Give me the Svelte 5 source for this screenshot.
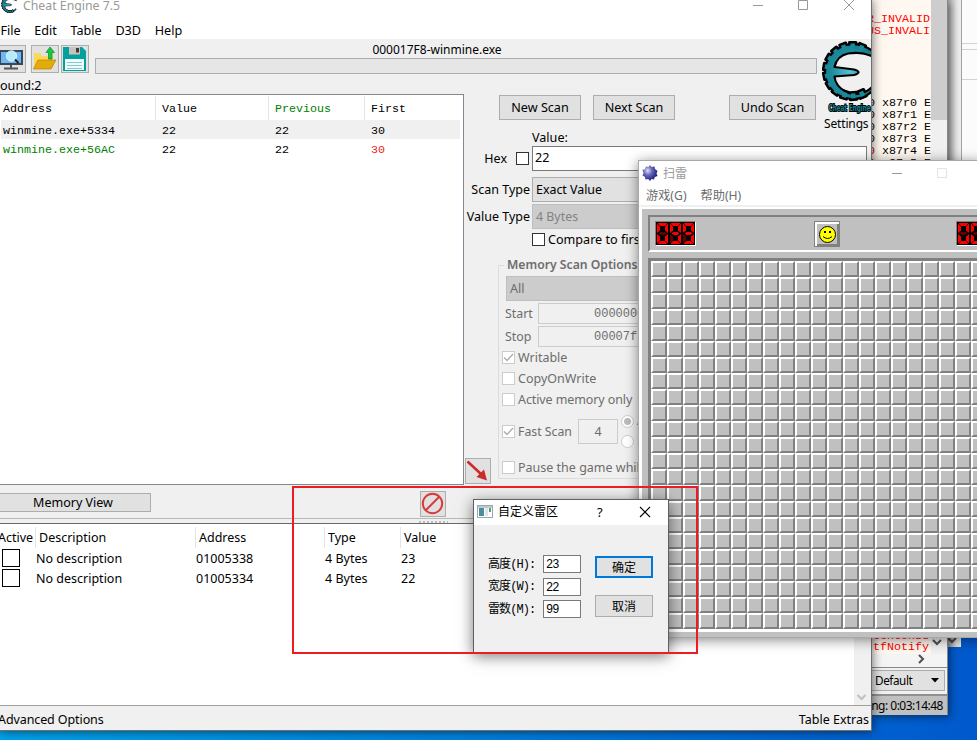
<script>
  const menus = ['File', 'Edit', 'Table', 'D3D', 'Help'];
  const found = [
    { address: 'winmine.exe+5334', value: '22', previous: '22', first: '30', kind: 'selected' },
    { address: 'winmine.exe+56AC', value: '22', previous: '22', first: '30', kind: 'static' }
  ];
  const records = [
    { address: '01005338', value: '23' },
    { address: '01005334', value: '22' }
  ];
  const fields = [
    { label: '高度(H):', value: '23' },
    { label: '宽度(W):', value: '22' },
    { label: '雷数(M):', value: '99' }
  ];
  const registers = [0, 1, 2, 3, 4, 5];
  const segments = [
    'M1.500 1H11.500L9 4H4Z',
    'M12 1.500V11L9 8.500V4.500Z',
    'M12 12V21.500L9 18.500V14.500Z',
    'M1.500 22H11.500L9 19H4Z',
    'M1 12V21.500L4 18.500V14.500Z',
    'M1 1.500V11L4 8.500V4.500Z',
    'M2.500 11.500L4.500 10H8.500L10.500 11.500L8.500 13H4.500Z'
  ];
  const lit = { 0: [0, 1, 2, 3, 4, 5], 9: [0, 1, 2, 3, 5, 6] };
  const teeth = Array.from({ length: 12 }, (_, i) => 22 - i * 20.5);
</script>

{#snippet gear()}
  <g stroke="#000" stroke-width="3" stroke-linejoin="round" fill="#178a9b">
    {#each teeth as a}
      <rect x="-3.2" y="-28.5" width="6.4" height="7" transform="translate(30 30) rotate({a})" />
    {/each}
  </g>
  <path d="M53 12C44 4 34 1.500 24 4C11 8 3 18 3 31C3 43 11 54 24 57C35 60 46 56 53 47L51 45C44 53 32 55 24 51C17 47 13 42 12.500 35.500L32 34Q41 31 32 28.500L12.500 26C14 19 19 14 26 12.500C35 11 45 12 53 17Z" fill="url(#teal)" stroke="#000" stroke-width="2.2" stroke-linejoin="round" />
  <g fill="#178a9b">
    {#each teeth as a}
      <rect x="-2.2" y="-27.5" width="4.4" height="5" transform="translate(30 30) rotate({a})" />
    {/each}
  </g>
{/snippet}

{#snippet digit(n)}
  <svg width="13" height="23" viewBox="0 0 13 23">
    <rect width="13" height="23" fill="#000" />
    {#each segments as d, i}
      <path {d} fill={lit[n].includes(i) ? '#f00' : '#600000'} />
    {/each}
  </svg>
{/snippet}

{#snippet check(on = false, dim = false)}
  <span class="check" class:dim>
    {#if on}<svg width="11" height="11" viewBox="0 0 11 11"><path d="M1 5.5L4 8.5L10 2" fill="none" stroke="#adadad" stroke-width="1.4" /></svg>{/if}
  </span>
{/snippet}

<div class="desktop">
  <section class="win far">
    <div class="far-head"></div>
    <div class="far-row"></div>
    <div class="far-gap"></div>
  </section>
  <section class="win farscroll">
    <svg width="14" height="10" viewBox="0 0 14 10"><path d="M1 1L5 5L9 1" fill="none" stroke="#505050" stroke-width="2" /></svg>
  </section>

  <section class="win debugger">
    <div class="dbg-main">
      <div class="dbg-code">
        <div class="red flags"><span>R_INVALID</span><span>US_INVALI</span></div>
        <div class="regs">
          {#each registers as r}<span><i class:hot={r > 3}>0</i> x87r{r} E</span>{/each}
        </div>
        <div class="red tail"><span>textonSu</span><span>tfNotify</span></div>
      </div>
      <div class="dbg-scroll"><div class="thumb"></div>
        <svg width="15" height="12" viewBox="0 0 15 12"><path d="M2 4L6 8L10 4" fill="none" stroke="#505050" stroke-width="2" /></svg>
      </div>
    </div>
    <div class="dbg-hscroll"><svg width="10" height="10" viewBox="0 0 10 10"><path d="M1 1L5 5L1 9" fill="none" stroke="#505050" stroke-width="2" /></svg></div>
    <div class="dbg-combo"><span>Default</span><svg width="8" height="5" viewBox="0 0 8 5"><path d="M0 0H8L4 4.5Z" /></svg></div>
    <div class="dbg-status">ng: 0:03:14:48</div>
  </section>

  <section class="win engine">
    <header class="title">
      <svg class="mini" width="17" height="17" viewBox="0 0 58 60"><g>{@render gear()}</g></svg>
      <span class="name">Cheat Engine 7.5</span>
      <svg class="ctl" width="100" height="14" viewBox="0 0 100 14"><path d="M0 6.5H10M45.500 1.500H54.500V10.500H45.500ZM91 1L101 11M101 1L91 11" transform="translate(-3 -1)" fill="none" stroke="#999" /></svg>
    </header>
    <nav class="menu">{#each menus as m}<span>{m}</span>{/each}</nav>

    <div class="upper">
      <div class="tools">
        <div class="iconrow">
          <span class="tool">
            <svg width="26" height="26" viewBox="0 0 26 26"><rect x="0" y="4" width="24" height="15" fill="#34495a" /><rect x="2" y="6" width="20" height="11" fill="#72b6f4" /><circle cx="12.500" cy="10" r="5.200" fill="#b9ecf8" stroke="#d9f5fb" /><path d="M16 13.500L19.500 17" stroke="#222" stroke-width="2" /><path d="M12 19V22M5 22.500H19" stroke="#555" stroke-width="2" /></svg>
          </span>
          <span class="tool">
            <svg width="26" height="26" viewBox="0 0 26 26"><path d="M2 7H8L10 10H21V22H2Z" fill="#fbd75b" /><path d="M6 14H24L19 23H1.500Z" fill="#e3ab0a" stroke="#b88400" stroke-width=".7" /><path d="M18 1L22.500 6.500H20V13H16.500V6.500H14Z" fill="#14c840" stroke="#0a8e2a" stroke-width=".7" /></svg>
          </span>
          <span class="tool">
            <svg width="26" height="26" viewBox="0 0 26 26"><path d="M1 1H20L24 5V25H1Z" fill="#03a09d" /><rect x="7" y="1" width="11" height="7.500" fill="#c5c5bd" /><rect x="14" y="2" width="3" height="4.500" fill="#423b38" /><rect x="3" y="13" width="19" height="11" fill="#eefcfc" /><path d="M5 16.500H20M5 19.500H20M5 22.500H20" stroke="#86c9c8" /></svg>
          </span>
          <div class="progress"><span>000017F8-winmine.exe</span><div class="bar"></div></div>
        </div>
        <div class="foundcount">ound:2</div>
      </div>

      <div class="settings">
        <svg width="50" height="73" viewBox="0 0 50 73">
          <defs><radialGradient id="teal" cx=".5" cy=".5" r=".6"><stop offset="0" stop-color="#57c4d6" /><stop offset=".6" stop-color="#1f8c9e" /><stop offset="1" stop-color="#147082" /></radialGradient></defs>
          {@render gear()}
          <text x="6.500" y="70" textLength="42" lengthAdjust="spacingAndGlyphs" class="logotext">Cheat Engine</text>
        </svg>
        <span>Settings</span>
      </div>

      <div class="list">
        <div class="lrow lhead"><span>Address</span><span>Value</span><span class="green">Previous</span><span>First</span></div>
        {#each found as f}
          <div class="lrow {f.kind}"><span>{f.address}</span><span>{f.value}</span><span>{f.previous}</span><span class="first">{f.first}</span></div>
        {/each}
      </div>

      <div class="buttons"><span class="btn">New Scan</span><span class="btn">Next Scan</span><span class="btn undo">Undo Scan</span></div>

      <div class="form">
        <div class="vlabel">Value:</div>
        <div class="frow hexrow"><span class="lab hexlab">Hex</span>{@render check()}<div class="input">22</div></div>
        <div class="frow"><span class="lab">Scan Type</span><div class="combo">Exact Value</div></div>
        <div class="frow vt"><span class="lab">Value Type</span><div class="combo off">4 Bytes</div></div>
        <div class="compare">{@render check()}<span>Compare to first</span></div>
        <div class="bottomform">
          <span class="arrowbtn"><svg width="24" height="24" viewBox="0 0 24 24"><path d="M1.500 2.500L15 15" stroke="#cc2b2b" stroke-width="2.6" /><path d="M21 21.500L18 10.500L10.500 18Z" fill="#cc2b2b" /></svg></span>
          <fieldset>
            <legend>Memory Scan Options</legend>
            <div class="all">All</div>
            <div class="range"><span>Start</span><div>0000000</div></div>
            <div class="range"><span>Stop</span><div>00007ff</div></div>
            <div class="opt">{@render check(true, true)}<span>Writable</span></div>
            <div class="opt">{@render check(false, true)}<span>CopyOnWrite</span></div>
            <div class="opt">{@render check(false, true)}<span class="amo">Active memory only</span></div>
            <div class="opt fast">{@render check(true, true)}<span class="fs">Fast Scan</span><div class="four">4</div>
              <div class="radios"><span><i class="radio on"></i>A</span><span><i class="radio"></i>L</span></div>
            </div>
            <div class="opt pause">{@render check(false, true)}<span>Pause the game while</span></div>
          </fieldset>
        </div>
      </div>
    </div>

    <div class="midbar">
      <span class="btn mem">Memory View</span>
      <span class="stop"><svg width="24" height="24" viewBox="0 0 24 24"><circle cx="11.500" cy="11.500" r="9.700" fill="none" stroke="#d83a3a" stroke-width="2" /><path d="M5 18L18 5" stroke="#d83a3a" stroke-width="2" /></svg></span>
    </div>
    <div class="splitter"><i></i></div>
    <div class="table">
      <div class="cols">
        <div class="trow thead"><span>Active</span><span>Description</span><span>Address</span><span>Type</span><span>Value</span></div>
        {#each records as r}
          <div class="trow"><span><b class="box"></b></span><span>No description</span><span>{r.address}</span><span>4 Bytes</span><span>{r.value}</span></div>
        {/each}
      </div>
      <div class="tscroll"><svg width="12" height="8" viewBox="0 0 12 8"><path d="M1.500 2L5.500 6L9.500 2" fill="none" stroke="#bfbfbf" stroke-width="2" /></svg></div>
    </div>
    <footer class="foot"><span>Advanced Options</span><span>Table Extras</span></footer>
  </section>

  <section class="win mines">
    <header class="mtitle">
      <svg width="16" height="16" viewBox="0 0 16 16"><defs><radialGradient id="ball" cx=".35" cy=".35" r=".7"><stop offset="0" stop-color="#dfe0f5" /><stop offset=".4" stop-color="#6a6ab8" /><stop offset="1" stop-color="#14147a" /></radialGradient></defs><path d="M8 0L9.500 2L12.500 1.500L13 4L15.500 6L14.500 8.500L15.500 11L12.800 12L12 14.500L9.500 14L8 16L6.200 14L3.500 14.500L3 12L.5 10.500L1.500 8L.5 5L3 4L4 1.500L6.500 2Z" fill="url(#ball)" /></svg>
      <span>扫雷</span>
      <svg class="mctl" width="70" height="14" viewBox="0 0 70 14"><path d="M0 8.500H10" stroke="#999" /><path d="M45.500 3.500H54.500V12.500H45.500Z" fill="none" stroke="#e3e3e3" /></svg>
    </header>
    <nav class="mmenu"><span>游戏(G)</span><span>帮助(H)</span></nav>
    <div class="mframe">
      <div class="score">
        <div class="led">{@render digit(0)}{@render digit(9)}{@render digit(9)}</div>
        <div class="face"><svg width="19" height="19" viewBox="0 0 19 19"><circle cx="9.500" cy="9.500" r="8" fill="#ff0" stroke="#000" /><path d="M6 6H8V8H6ZM11 6H13V8H11Z" /><path d="M5 11.500Q9.500 15.500 14 11.500" fill="none" stroke="#000" /></svg></div>
        <div class="led right">{@render digit(0)}{@render digit(0)}</div>
      </div>
      <div class="field">
        <svg width="326" height="368"><defs><pattern id="cell" width="16" height="16" patternUnits="userSpaceOnUse"><path d="M0 0H16V16H0Z" fill="#808080" /><path d="M0 0H16L14 2V14H2L0 16Z" fill="#fff" /><path d="M2 2H14V14H2Z" fill="#c0c0c0" /></pattern></defs><rect width="326" height="368" fill="url(#cell)" /></svg>
      </div>
    </div>
  </section>

  <section class="win dialog">
    <header class="dtitle">
      <svg width="16" height="14" viewBox="0 0 16 14"><rect x=".5" y=".5" width="15" height="12" fill="#fff" stroke="#9aa7ad" /><rect x="1" y="1" width="14" height="2" fill="#b8cbd2" /><rect x="2" y="3" width="5" height="8" fill="#4c8f98" /><rect x="8" y="3" width="3" height="8" fill="#dde4ea" /><rect x="12" y="3" width="2" height="4" fill="#5aa06c" /></svg>
      <span class="dname">自定义雷区</span><span class="q">?</span>
      <svg width="12" height="12" viewBox="0 0 12 12"><path d="M1 1L11 11M11 1L1 11" stroke="#000" stroke-width="1.100" /></svg>
    </header>
    <div class="dbody">
      <div class="dfields">{#each fields as f}<div class="dfield"><span>{f.label}</span><div>{f.value}</div></div>{/each}</div>
      <div class="dbtns"><span class="ok">确定</span><span>取消</span></div>
    </div>
  </section>
  <div class="marker"></div>
</div>

<style>
  .desktop { position: relative; width: 977px; height: 740px; overflow: hidden; white-space: nowrap; background: linear-gradient(90deg, #00a3ea, #0059cc); font: 12.600px/16px "Noto Sans", "Noto Sans CJK SC", sans-serif; color: #000; }
  .desktop :global(*) { box-sizing: border-box; }
  svg { display: block; flex: none; }
  .win { position: absolute; overflow: hidden; }
  .far { left: 961px; top: 0; width: 16px; height: 400px; background: #fbfbfb; border-left: 1px solid #a0a0a0; }
  .far-head { height: 44px; border-bottom: 1px solid #d2d2d2; }
  .far-row { height: 6px; border-bottom: 1px solid #d2d2d2; }
  .far-gap { height: 30px; border-bottom: 1px solid #d2d2d2; }
  .farscroll { left: 947px; top: 0; width: 14px; height: 647px; background: linear-gradient(90deg, #a8a8a8, #e4e4e4 70%, #eee); display: flex; align-items: flex-end; }
  .debugger { left: 871px; top: 0; width: 77px; height: 715px; background: #f0f0f0; border-right: 1px solid #828790; display: flex; flex-direction: column; font-family: "Liberation Mono", monospace; font-size: 11.700px; line-height: 12px; box-shadow: 2px 2px 8px #0007; }
  .dbg-main { display: flex; height: 654px; }
  .dbg-code { width: 60px; background: #fff8f0; overflow: hidden; display: flex; flex-direction: column; }
  .red { color: #f00; display: flex; flex-direction: column; }
  .flags { padding-top: 13px; height: 97px; }
  .regs { display: flex; flex-direction: column; height: 536px; margin-left: -3px; }
  .regs i { font-style: normal; }
  .regs .hot { color: #c00; }
  .flags span { margin-left: -4px; }
  .tail { margin-left: 2px; line-height: 11px; flex: none; margin-top: -2px; }
  .dbg-scroll { width: 16px; display: flex; flex-direction: column; justify-content: space-between; background: #f0f0f0; }
  .thumb { height: 120px; background: #cdcdcd; }
  .dbg-scroll svg { margin-bottom: 6px; }
  .dbg-hscroll { height: 14px; padding: 0 0 0 47px; border-bottom: 1px solid #828790; background: #f4f4f4; }
  .dbg-combo { margin: 2px 2px 0 0; height: 21px; border: 1px solid #acacac; background: #e1e1e1; display: flex; align-items: center; justify-content: space-between; padding: 0 5px 1px 3px; font: 11.700px/16px "Noto Sans", sans-serif; letter-spacing: -.4px; }
  .dbg-status { margin-top: 3px; height: 21px; border-top: 2px solid #909090; background: #c0c0c0; font: 12px/19px "Noto Sans", sans-serif; text-align: right; padding-right: 4px; letter-spacing: -.5px; }

  .engine { left: 0; top: 0; width: 872px; height: 731px; background: #f0f0f0; border-right: 1px solid #6f6f6f; border-bottom: 1px solid #6f6f6f; display: flex; flex-direction: column; box-shadow: 0 0 10px #0009; }
  .title { height: 18px; background: #fff; display: flex; color: #999; padding-left: 1px; flex: none; font-size: 12.300px; }
  .mini { margin-top: -4px; }
  .name { margin: -2px auto 0 5px; }
  .ctl { margin-right: 15px; overflow: visible; }
  .menu { height: 21px; background: #fff; display: flex; gap: 13.700px; padding: 5px 0 0 0.500px; flex: none; }
  .upper { display: grid; grid-template-columns: 464px 358px 1fr; grid-template-rows: 55px 38px 353px; flex: none; }
  .tools { grid-area: 1 / 1 / 2 / 3; }
  .iconrow { display: flex; height: 39px; padding-top: 6px; }
  .tool { width: 28px; height: 28px; border: 1px solid #adadad; background: #e1e1e1; flex: none; }
  .tool:nth-child(1) { margin-left: -2px; margin-right: 5px; }
  .tool:nth-child(2) { margin-right: 2px; }
  .progress { margin-left: 6px; width: 722px; text-align: center; font-size: 12px; padding-right: 38px; }
  .progress span { display: block; height: 13px; line-height: 9px; }
  .bar { height: 16px; width: 722px; border: 1px solid #adadad; background: #e6e6e6; }
  .foundcount { height: 16px; }
  .settings { grid-area: 1 / 3 / 3 / 4; display: flex; flex-direction: column; padding-top: 2px; }
  .settings span { margin: 2px 0 0 2px; font-size: 12px; letter-spacing: -.15px; }
  .logotext { font: bold 8.5px "DejaVu Sans", sans-serif; fill: #15828f; stroke: #000; stroke-width: 2px; paint-order: stroke; }
  .list { grid-area: 2 / 1 / 4 / 2; border: 1px solid #828790; border-left: 0; background: #fff; padding: 1px 3px 0 1px; font: 11.67px/22px "Liberation Mono", monospace; height: 391px; }
  .lrow { display: grid; grid-template-columns: 155px 113px 96px 1fr; height: 19px; }
  .lrow.lhead { height: 24px; grid-template-columns: 154px 113px 96px 1fr; }
  .lhead span { border-left: 1px solid #e5e5e5; line-height: 27px; height: 24px; }
  .lhead span:first-child { border-left: 0; }
  .lrow span { padding-left: 6px; }
  .lrow span:first-child { padding-left: 2px; }
  .green, .static span:first-child { color: #008000; }
  .selected { background: #f0f0f0; }
  .static .first { color: #ed1c24; }
  .buttons { grid-area: 2 / 2 / 3 / 3; display: flex; padding: 1px 6px 0 35px; align-items: flex-start; }
  .btn { height: 25px; width: 82px; border: 1px solid #adadad; background: #e1e1e1; text-align: center; line-height: 24px; margin-right: 12px; }
  .undo { margin-left: auto; margin-right: 0; width: 87px; }
  .form { grid-area: 3 / 2 / 4 / 4; display: flex; flex-direction: column; }
  .vlabel { height: 14px; line-height: 11px; padding-left: 68px; }
  .frow { display: flex; height: 25px; margin-bottom: 6px; align-items: center; }
  .frow:nth-child(3) { margin-bottom: 2px; }
  .lab { width: 66px; margin-right: 2px; text-align: right; font-size: 12.500px; }
  .hexlab { width: 43px; margin-right: 9px; }
  .check { width: 13px; height: 13px; border: 1px solid #333; background: #fff; display: inline-block; flex: none; }
  .dim { border-color: #ccc; }
  .input { margin-left: 3px; width: 335px; height: 25px; border: 1px solid #7a7a7a; background: #fff; padding: 3px 2px; }
  .combo { width: 335px; height: 25px; background: #e1e1e1; border: 1px solid #adadad; padding: 4px 3px; font-size: 12.400px; }
  .combo.off { background: #ccc; border-color: #bfbfbf; color: #838383; }
  .vt { margin-bottom: 4px; }
  .compare { display: flex; align-items: center; gap: 3px; height: 13px; padding-left: 68px; }
  .bottomform { display: flex; align-items: flex-end; padding-left: 1px; color: #6d6d6d; margin-top: 10px; height: 228px; }
  .arrowbtn { width: 26px; height: 26px; border: 1px solid #adadad; background: #e1e1e1; flex: none; }
  fieldset { margin: 0 0 5px 7px; padding: 0 0 0 3px; border: 1px solid #dcdcdc; width: 370px; height: 222px; min-width: 0; }
  legend { font-weight: 600; font-size: 12.200px; line-height: 16px; height: 16px; padding: 0 3px; margin-left: 2px; }
  .all { height: 25px; background: #ccc; border: 1px solid #bfbfbf; padding: 4px 3px; margin: 3px 0 2px 4px; }
  .range { display: flex; height: 21px; margin-bottom: 2px; align-items: center; font-size: 12.400px; }
  .range span { width: 36px; padding-left: 3px; }
  .range div { border: 1px solid #ccc; height: 21px; width: 200px; padding: 2px 0 0 55px; font: 12px/16px "Liberation Mono", monospace; }
  .opt { display: flex; height: 13px; gap: 3px; align-items: center; margin: 0 0 8px; font-size: 12.500px; }
  .amo { letter-spacing: -.1px; }
  .range + .opt { margin-top: 4px; }
  .fast { height: 32px; margin: 0 0 15px; padding-top: 3px; }
  .fs { width: 57px; font-size: 12.300px; }
  .four { width: 40px; height: 25px; border: 1px solid #ccc; text-align: center; line-height: 23px; }
  .radios { display: flex; flex-direction: column; gap: 4px; margin-top: -1px; }
  .radios span { display: flex; align-items: center; gap: 3px; height: 16px; }
  .radio { width: 13px; height: 13px; border: 1px solid #ccc; border-radius: 50%; background: #fff; }
  .radio.on { background: radial-gradient(#bbb 3px, #fff 4px); }

  .midbar { height: 33px; display: flex; align-items: center; padding-top: 4px; flex: none; }
  .mem { width: 153px; height: 19px; margin: -2px 269px 0 -2px; line-height: 18px; padding-right: 3px; font-size: 12.500px; }
  .stop { width: 26px; height: 26px; border: 1px solid #adadad; background: #e1e1e1; }
  .splitter { height: 6px; border-top: 1px solid #b8b8b8; border-bottom: 1px solid #696969; flex: none; padding: 2px 0 0 419px; }
  .splitter i { display: block; width: 29px; height: 2px; background: repeating-linear-gradient(90deg, #bbb 0 2px, #f0f0f0 2px 4px); }
  .table { height: 182px; background: #fff; border-bottom: 1px solid #a0a0a0; display: flex; flex: none; }
  .cols { flex: 1; padding-top: 3px; font-size: 12.500px; }
  .trow { display: grid; grid-template-columns: 35px 160px 129px 76px 1fr; height: 20px; line-height: 21px; }
  .trow span { padding-left: 1px; }
  .thead { height: 21px; line-height: 22px; }
  .thead span { padding-left: 3px; border-left: 1px solid #e5e5e5; height: 21px; }
  .thead span:first-child { margin-left: -2px; padding-left: 0; border: 0; }
  .box { display: block; width: 18px; height: 18px; border: 1px solid #000; margin: 1px; }
  .tscroll { width: 17px; background: #f0f0f0; display: flex; align-items: flex-end; padding: 0 0 4px 2px; }
  .foot { display: flex; justify-content: space-between; padding: 6px 2px 0 0; font-size: 12.500px; }
  .foot span:first-child { margin-left: -2px; letter-spacing: -.1px; }

  .mines { left: 638px; top: 160px; width: 345px; height: 478px; background: #fff; border: 1px solid #a8a8a8; box-shadow: 0 2px 12px #0007; }
  .mtitle { display: flex; height: 25px; padding: 4px 0 0 3px; color: #999; font-size: 12px; }
  .mtitle span { margin: 0 0 0 5px; line-height: 17px; }
  .mctl { margin-left: 205px; }
  .mmenu { display: flex; gap: 14px; height: 21px; padding-left: 7px; margin-bottom: 2px; color: #6d6d6d; font-size: 12.200px; line-height: 20px; border-bottom: 2px solid #f0f0f0; }
  .mframe { margin-left: 3px; background: #c0c0c0; padding: 6px 0 0 6px; height: 428px; }
  .score { height: 37px; border: 2px solid #808080; border-right: 0; border-bottom-color: #fff; display: flex; padding: 4px 0 0 5px; margin-bottom: 6px; }
  .led { width: 41px; height: 25px; display: flex; flex: none; border: 1px solid #808080; border-right-color: #fff; border-bottom-color: #fff; overflow: hidden; }
  .face { margin: 0 116px 0 118px; width: 26px; height: 26px; border: 1px solid #808080; background: #c0c0c0; box-shadow: inset 2px 2px #fff, inset -2px -2px #808080; padding: 3px; flex: none; }
  .right { width: 28px; border-right: 0; }
  .field { border: 3px solid #808080; border-right: 0; border-bottom-color: #fff; height: 374px; overflow: hidden; }

  .dialog { left: 473px; top: 499px; width: 196px; height: 154px; background: #f0f0f0; border: 1px solid #606060; border-bottom: 0; box-shadow: 0 3px 14px #0008; }
  .dtitle { height: 25px; background: #fff; display: flex; align-items: center; padding: 0 0 1px 3px; font-size: 12px; }
  .dname { margin-left: 5px; width: 99px; }
  .q { width: 42px; font-size: 13px; }
  .dbody { display: flex; padding: 30px 0 0 14px; font: 12px/14px "Liberation Mono", "Noto Sans CJK SC", monospace; }
  .dfields { width: 107px; display: flex; flex-direction: column; gap: 4.500px; }
  .dfield { display: flex; align-items: center; height: 18px; }
  .dfield span { width: 55px; letter-spacing: -.9px; padding-top: 1px; }
  .dfield div { width: 38px; height: 18px; border: 1px solid #7a7a7a; background: #fff; padding: 2px 2px 0; letter-spacing: -1px; }
  .dbtns { display: flex; flex-direction: column; gap: 17px; padding-top: 1px; }
  .dbtns span { width: 58px; height: 22px; border: 1px solid #adadad; background: #e1e1e1; text-align: center; line-height: 24px; }
  .dbtns .ok { border: 2px solid #0078d7; line-height: 22px; }
  .marker { position: absolute; left: 292px; top: 486px; width: 406px; height: 168px; border: 2px solid #ed1c24; }
</style>
